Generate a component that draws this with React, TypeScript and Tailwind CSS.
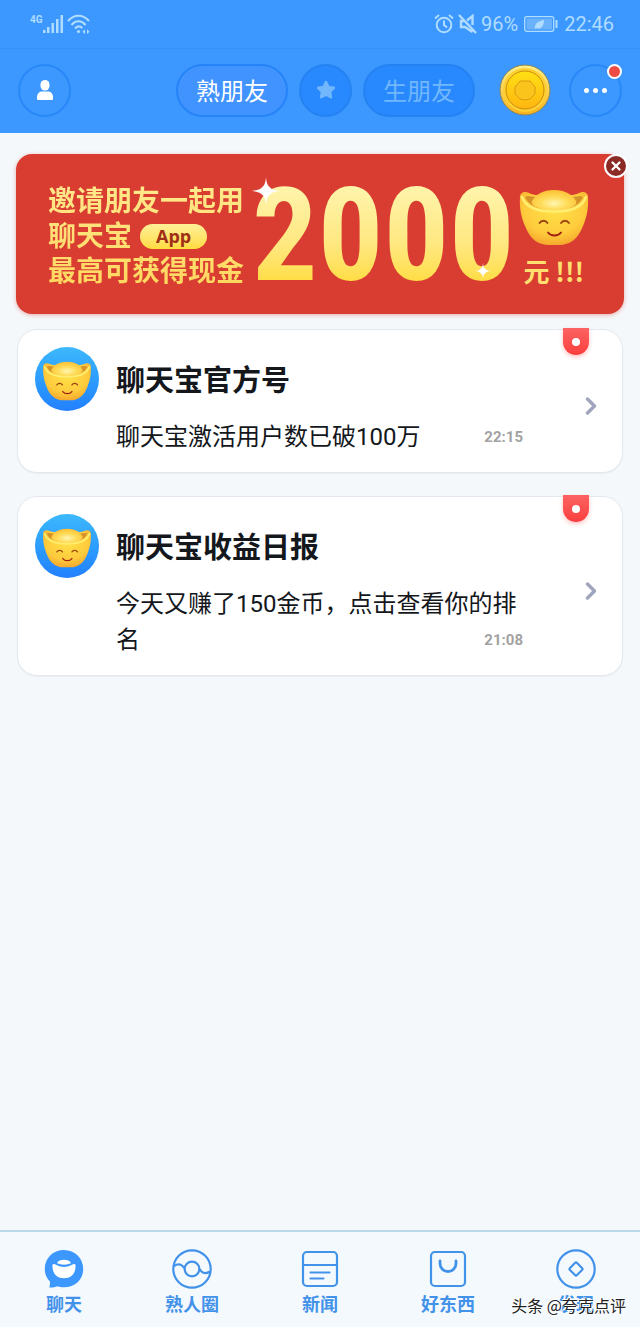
import { ChevronRight, Star, X } from "lucide-react";

interface Chat {
  id: string;
  title: string;
  message: string;
  time: string;
}

const CHATS: Chat[] = [
  { id: "official", title: "聊天宝官方号", message: "聊天宝激活用户数已破100万", time: "22:15" },
  { id: "daily", title: "聊天宝收益日报", message: "今天又赚了150金币，点击查看你的排名", time: "21:08" },
];

const TABS = [
  { id: "chat", label: "聊天", icon: <ChatIcon /> },
  { id: "circle", label: "熟人圈", icon: <CircleIcon /> },
  { id: "news", label: "新闻", icon: <NewsIcon /> },
  { id: "shop", label: "好东西", icon: <ShopIcon /> },
  { id: "find", label: "发现", icon: <FindIcon /> },
];

function ChatIcon() {
  return (
    <svg viewBox="0 0 40 40" className="size-10">
      <path d="M20 1C9 1 .8 9 .8 20c0 5.500 2 9.500 5.200 12.500 0 2 0 4-.8 6 3 .2 6-.3 8.200-1.300 2.200.7 4.200 1 6.600 1 11 0 19.200-7.500 19.200-18.200S31 1 20 1z" fill="#3c98ff" />
      <path d="M8.500 15.500c1-.8 2-.8 3 0 5 3.200 12 3.200 17 0 1-.8 2-.8 3 0C32 24 28 29.200 20 29.200S8 24 8.500 15.500z" fill="#fff" />
      <path d="M13 14c1-2.300 4-3.300 7-3.300s6 1 7 3.300c-4 2.300-10 2.300-14 0z" fill="#fff" />
    </svg>
  );
}

function CircleIcon() {
  return (
    <svg viewBox="0 0 40 40" className="size-10" fill="none" stroke="#4292ea" strokeWidth="2.200">
      <circle cx="20" cy="20" r="18.700" />
      <circle cx="20" cy="20" r="7.300" />
      <path d="M2 17c3-2 6.500-2 8.500 0 1 1.200 1.500 2 2.500 2.500M38 22.500c-3 2-6.500 2-8.500 0-1-1.200-1.500-2-2.500-2.500" />
    </svg>
  );
}

function NewsIcon() {
  return (
    <svg viewBox="0 0 40 40" className="size-10" fill="none" stroke="#4292ea" strokeWidth="2.200" strokeLinecap="round">
      <rect x="3" y="3" width="34" height="34" rx="4" />
      <path d="M3 16h34M10.500 23.500h19M10.500 29.500h13" />
    </svg>
  );
}

function ShopIcon() {
  return (
    <svg viewBox="0 0 40 40" className="size-10" fill="none" stroke="#4292ea" strokeWidth="2.200" strokeLinecap="round">
      <rect x="3" y="3" width="34" height="34" rx="4" />
      <path d="M12 12v2.500a8 8 0 0 0 16 0V12" strokeWidth="2.800" />
    </svg>
  );
}

function FindIcon() {
  return (
    <svg viewBox="0 0 40 40" className="size-10" fill="none" stroke="#4292ea" strokeWidth="2.200">
      <circle cx="20" cy="20" r="18.700" />
      <rect x="15" y="15" width="10" height="10" rx="1.500" transform="rotate(45 20 20)" />
    </svg>
  );
}

function Ingot({ id, className }: { id: string; className: string }) {
  return (
    <svg viewBox="0 0 70 57" className={className}>
      <defs>
        <radialGradient id={`${id}-body`} cx=".5" cy=".35" r=".68">
          <stop offset="0" stopColor="#ffe048" />
          <stop offset=".65" stopColor="#fecb3c" />
          <stop offset="1" stopColor="#f5a42c" />
        </radialGradient>
        <radialGradient id={`${id}-top`} cx=".5" cy=".65" r=".6">
          <stop offset="0" stopColor="#fff6b4" />
          <stop offset=".5" stopColor="#ffdc5a" />
          <stop offset="1" stopColor="#fcc338" />
        </radialGradient>
      </defs>
      <path d="M1 8C1 3 6 2 10 4c3 1.500 5 2 9 2h32c4 0 6-.5 9-2 4-2 9-1 9 4 .6 9-.6 19-5 29-5 13-13 19-24 19H30C19 56 11 50 6 37 1.600 27 .4 17 1 8z" fill={`url(#${id}-body)`} />
      <path d="M6 8c3-2 6 0 11 0h36c5 0 8-2 11 0-4 9-14 13.500-29 13.500S10 17 6 8z" fill="#d6922a" />
      <path d="M13 12C17 5 24 1 35 1s18 4 22 11c2 6-10 9.500-22 9.500S11 18 13 12z" fill={`url(#${id}-top)`} />
      <path d="M3 8C6 17 17 22.500 35 22.500S64 17 67 8" fill="none" stroke="#ffee70" strokeWidth="2.500" strokeLinecap="round" />
      <g fill="none" stroke="#9a4212" strokeWidth="1.800" strokeLinecap="round">
        <path d="M20.500 34c2-3 6-3 8 0M42 34c2-3 6-3 8 0" />
        <path d="M29 43.500c3 4 10 4 13 0" stroke="#a01e12" />
      </g>
    </svg>
  );
}

function Coin() {
  return (
    <svg viewBox="0 0 52 52" className="size-[52px]">
      <defs>
        <linearGradient id="coin" x1="0" y1="0" x2="0" y2="1">
          <stop offset="0" stopColor="#ffe014" />
          <stop offset="1" stopColor="#ffb60f" />
        </linearGradient>
        <linearGradient id="coin-rim" x1="0" y1="0" x2="0" y2="1">
          <stop offset="0" stopColor="#fff08c" />
          <stop offset="1" stopColor="#f7b01c" />
        </linearGradient>
      </defs>
      <circle cx="26" cy="26" r="25" fill="url(#coin-rim)" stroke="#8a8658" strokeWidth="1" />
      <circle cx="26" cy="26" r="22" fill="#fdd030" />
      <circle cx="26" cy="26" r="19" fill="url(#coin)" stroke="#c98a10" strokeWidth="1" />
      <path d="M21 17h10l5 6v7l-5 5-5 1-5-1-5-5v-7z" fill="#fbc41c" stroke="#d99a10" strokeWidth="1" strokeLinejoin="round" />
    </svg>
  );
}

function Sparkle({ className }: { className: string }) {
  return (
    <svg viewBox="0 0 24 24" className={className}>
      <circle cx="12" cy="12" r="5" fill="#fff" opacity=".35" />
      <path d="M12 0c.6 8 3 11 12 12-9 1-11.400 4-12 12-.6-8-3-11-12-12 9-1 11.400-4 12-12z" fill="#fff" />
    </svg>
  );
}

function StatusBar() {
  return (
    <div className="flex h-12 items-center justify-between pr-[26px] pl-[30px] text-[#b0dcff]">
      <div className="flex items-center">
        <span className="self-start text-[10px] leading-3 font-bold">4G</span>
        <svg viewBox="0 0 20 18" className="h-[18px] w-5" fill="currentColor">
          <path d="M0 15h2.500v3H0zM4 12h2.500v6H4zM8.500 8H11v10H8.500zM13 4h2.500v14H13zM17.500 0H20v18h-2.500z" />
        </svg>
        <svg viewBox="0 0 24 20" className="ml-1 h-5 w-6" fill="none" stroke="currentColor" strokeWidth="2.200">
          <path d="M1 7c6-7 15-7 21 0M4.500 11c4-5 10-5 14 0M8 14.500c2-2.500 5-2.500 7.500-.5" />
          <circle cx="11.500" cy="17.500" r="1.600" fill="currentColor" stroke="none" />
          <path d="m18 15.200-2.500 2.500L18 20zM20 15.200l2.500 2.500L20 20z" fill="currentColor" stroke="none" />
        </svg>
      </div>
      <div className="flex items-center text-xl">
        <svg viewBox="0 0 20 20" className="mr-1 size-5" fill="none" stroke="currentColor" strokeWidth="2">
          <circle cx="10" cy="11" r="7.300" />
          <path d="M10 6.500V11l3 2.500M1 4.500 5 1M19 4.500 15 1" />
        </svg>
        <svg viewBox="0 0 20 20" className="mr-[3px] size-5" fill="none" stroke="currentColor" strokeWidth="2.400">
          <path d="M14.500 11V2L9 6.500M6 7H3v6h4l7.500 5M1 1l17 18" />
        </svg>
        <span>96%</span>
        <svg viewBox="0 0 34 18" className="mx-[6px] h-[18px] w-[34px]" fill="none" stroke="currentColor">
          <rect x=".7" y="1.700" width="29" height="14.600" rx="2" strokeWidth="1.300" />
          <rect x="2.500" y="3.500" width="25.500" height="11" fill="#6cb2fb" stroke="none" />
          <path d="M11 14c-1-5 3-8 9-9 0 6-3 10-8 8z" fill="currentColor" stroke="none" />
          <path d="M32.500 5v8" strokeWidth="2" />
        </svg>
        <span>22:46</span>
      </div>
    </div>
  );
}

function Header() {
  return (
    <header className="bg-[#3c98ff]">
      <StatusBar />
      <div className="flex h-[85px] items-center border-t border-[#3690f5] px-[18px] pb-0.5 text-2xl">
        <button aria-label="个人" className="flex size-[53px] items-center justify-center rounded-full border-2 border-[#2988f8]">
          <svg viewBox="0 0 16 20" className="h-5 w-4" fill="#fff">
            <rect x="3.500" y="0" width="9" height="10.500" rx="4.500" />
            <path d="M0 18.500V17c0-3.500 2.500-5.500 5-5.500h6c2.500 0 5 2 5 5.500v1.500c0 1-.5 1.500-1.500 1.500h-13C.5 20 0 19.500 0 18.500z" />
          </svg>
        </button>
        <div className="ml-auto flex items-center gap-[11px]">
          <button className="h-[53px] w-28 rounded-full border-2 border-[#2585f8] bg-[#4193ff] pt-1 text-white">熟朋友</button>
          <button aria-label="收藏" className="flex size-[53px] items-center justify-center rounded-full border-2 border-[#2482f3] bg-[#2889ff]">
            <Star size={20} className="fill-[#72b7fc] text-[#72b7fc]" />
          </button>
          <button className="h-[53px] w-28 rounded-full border-2 border-[#2482f3] bg-[#2889ff] pt-1 text-[#72b7fc]">生朋友</button>
        </div>
        <button aria-label="金币" className="ml-6"><Coin /></button>
        <button aria-label="更多" className="relative ml-[18px] flex size-[53px] items-center justify-center gap-1 rounded-full border-2 border-[#2988f8]">
          <span className="size-[5px] rounded-full bg-white" />
          <span className="size-[5px] rounded-full bg-white" />
          <span className="size-[5px] rounded-full bg-white" />
          <span className="absolute -top-0.5 -right-0.5 size-[15px] rounded-full border-2 border-white bg-[#ee4b45]" />
        </button>
      </div>
    </header>
  );
}

function Banner() {
  return (
    <section className="relative mx-4 flex h-40 items-center rounded-2xl bg-[#d93d31] pt-1 pl-8 text-[#ffdf70] shadow-[0_1px_4px_rgba(217,61,49,0.4)]">
      <div className="bg-linear-to-b from-[#ffe98c] to-[#ffd75c] bg-clip-text text-[28px] leading-[35px] font-bold whitespace-nowrap text-transparent">
        <p>邀请朋友一起用</p>
        <p className="flex items-center gap-2">
          聊天宝
          <span className="rounded-full bg-linear-to-b from-[#ffef96] to-[#ffdc3c] px-4 font-['Open_Sans',sans-serif] text-lg leading-[25px] text-[#a02f18]">App</span>
        </p>
        <p>最高可获得现金</p>
      </div>
      <div className="relative ml-2">
        <p className="bg-linear-to-b from-[#fff3a8] from-20% via-[#ffe880] via-55% to-[#ffdb30] to-85% bg-clip-text font-['Roboto_Condensed','DejaVu_Sans_Condensed',sans-serif] text-[130px] leading-[150px] font-bold text-transparent">2000</p>
        <Sparkle className="absolute top-4 left-0 size-7" />
        <Sparkle className="absolute right-6 bottom-8 size-4" />
      </div>
      <div className="ml-1 flex flex-col items-center gap-[7px] pt-1">
        <Ingot id="banner" className="h-[57px] w-[70px]" />
        <p className="font-['Noto_Sans_CJK_SC',sans-serif] text-[26px] leading-[35px] font-bold whitespace-nowrap">元 !!!</p>
      </div>
      <button aria-label="关闭" className="absolute top-0 -right-1 flex size-6 items-center justify-center rounded-full border-2 border-white bg-[#8c2a26] text-white">
        <X size={14} strokeWidth={4} />
      </button>
    </section>
  );
}

function ChatCard({ chat }: { chat: Chat }) {
  return (
    <a href={`#${chat.id}`} className="relative flex items-start rounded-[20px] border border-[#e3e8ee] bg-white p-[17px] text-[#14171b] shadow-[0_1px_1px_rgba(0,0,0,0.04)]">
      <span className="flex size-16 shrink-0 items-center justify-center rounded-full bg-linear-to-b from-[#3db8fc] to-[#2380ff] pt-1">
        <Ingot id={chat.id} className="h-10 w-[50px]" />
      </span>
      <div className="ml-[17px] grid flex-1">
        <h2 className="pt-3.5 text-[29px] leading-10 font-bold">{chat.title}</h2>
        <p className="col-start-1 row-start-2 mt-[18px] text-2xl leading-9">{chat.message}</p>
        <time className="col-start-1 row-start-2 self-end justify-self-end text-[15px] leading-9 font-bold text-[#a2a2a2]">{chat.time}</time>
      </div>
      <ChevronRight size={28} strokeWidth={3} className="mt-2.5 ml-[54px] self-center text-[#a0a5bd]" />
      <span className="absolute -top-0.5 right-[33px] flex h-[27px] w-[26px] items-center justify-center rounded-t-sm rounded-b-full bg-linear-to-b from-[#fb6262] to-[#fb3d3d] shadow-[0_2px_4px_rgba(255,60,60,0.3)]">
        <span className="size-2 rounded-full bg-white" />
      </span>
    </a>
  );
}

export default function App() {
  return (
    <div className="flex min-h-screen flex-col bg-[#f4f8fb] font-['Roboto','Noto_Sans_CJK_SC',sans-serif]">
      <Header />
      <main className="flex-1 pt-[21px]">
        <Banner />
        <div className="mx-[17px] mt-[15px] space-y-[23px]">
          {CHATS.map((c) => <ChatCard key={c.id} chat={c} />)}
        </div>
      </main>
      <nav className="relative flex h-[97px] border-t-2 border-[#bbd9e8] bg-[#f4f9fe] pt-[17px]">
        {TABS.map((t) => (
          <button key={t.id} className="flex flex-1 flex-col items-center gap-1 text-lg leading-6 font-bold text-[#4292ea]">
            {t.icon}
            {t.label}
          </button>
        ))}
        <span className="absolute right-[14px] bottom-2.5 font-['Noto_Sans_CJK_SC',sans-serif] text-base leading-6 text-[#222] [text-shadow:-1px_-1px_0_#fff,1px_1px_0_#fff]">头条 @夸克点评</span>
      </nav>
    </div>
  );
}
